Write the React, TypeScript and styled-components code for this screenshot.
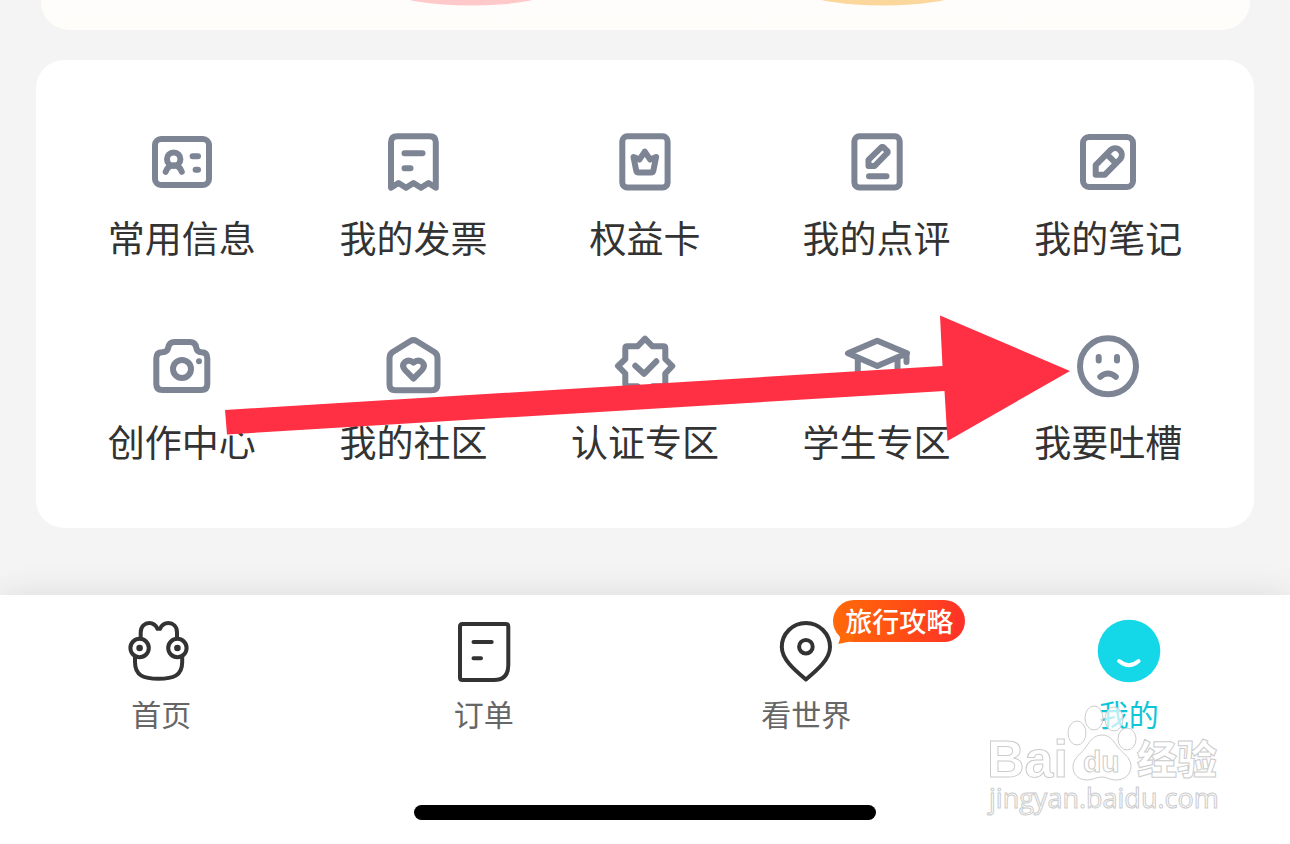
import React from "react";
import styled, { createGlobalStyle } from "styled-components";

const GlobalStyle = createGlobalStyle`
  * { box-sizing: border-box; }
  body {
    margin: 0;
    background: #f4f4f4;
    font-family: "Noto Sans CJK SC", sans-serif;
    -webkit-font-smoothing: antialiased;
  }
`;

const Page = styled.div`
  display: flex;
  flex-direction: column;
  min-height: 100vh;
  background: #f4f4f4;
`;

const Content = styled.main`
  flex: 1;
  display: flex;
  flex-direction: column;
  gap: 30px;
  padding: 0 36px 67px;
`;

const Promo = styled.section`
  display: grid;
  grid-template-columns: 366fr 128px 284fr 128px 303fr;
  height: 30px;
  margin: 0 4px 0 5px;
  border-radius: 0 0 28px 28px;
  background: linear-gradient(#fffdfb, #fffdfa);
`;

const PromoPill = styled.svg<{ $column: number }>`
  grid-column: ${(p) => p.$column};
  grid-row: 1;
  width: 128px;
  height: 6px;
`;

const Card = styled.section`
  position: relative;
  display: grid;
  grid-template-columns: repeat(5, 1fr);
  row-gap: 72px;
  padding: 70px 30px 62px;
  border-radius: 28px;
  background: #fff;
`;

const Tile = styled.button`
  display: flex;
  flex-direction: column;
  align-items: center;
  gap: 18px;
  padding: 0;
  border: 0;
  background: none;
  color: #333;
  font: 400 37px/50px "Noto Sans CJK SC", sans-serif;
  white-space: nowrap;
  cursor: pointer;
`;

const Icon = styled.svg<{ $color: string; $weight: number }>`
  display: block;
  width: 64px;
  height: 64px;
  overflow: visible;
  fill: none;
  stroke: ${(p) => p.$color};
  stroke-width: ${(p) => p.$weight};
  stroke-linecap: round;
  stroke-linejoin: round;
`;

const Pointer = styled.svg`
  position: absolute;
  inset: 0;
  width: 100%;
  height: 100%;
  fill: #ff3044;
  pointer-events: none;
`;

const TabBar = styled.nav`
  position: relative;
  display: flex;
  flex-direction: column;
  padding: 24px 0;
  background: #fff;
  box-shadow: 0 0 32px rgba(0, 0, 0, 0.1);
`;

const Tabs = styled.div`
  display: grid;
  grid-template-columns: repeat(4, 1fr);
`;

const Tab = styled.a<{ $active?: boolean }>`
  display: flex;
  flex-direction: column;
  align-items: center;
  gap: 10px;
  color: ${(p) => (p.$active ? "#0fc6d8" : "#666")};
  font-size: 30px;
  font-weight: 400;
  line-height: 40px;
  text-decoration: none;
`;

const TabIcon = styled.span`
  position: relative;
  display: block;
`;

const Badge = styled.span`
  position: absolute;
  left: 59px;
  top: -19px;
  padding: 0 12px;
  border-radius: 22px;
  background: linear-gradient(100deg, #ff6a08, #ff5014 50%, #ff2e2a);
  color: #fff;
  font-size: 27px;
  font-weight: 500;
  line-height: 42px;
  white-space: nowrap;

  &::before {
    content: "";
    position: absolute;
    left: 5px;
    bottom: -2px;
    width: 16px;
    height: 14px;
    background: #ff6a08;
    clip-path: polygon(0 0, 100% 40%, 80% 80%, 0 100%, 12% 60%);
  }
`;

const HomeIndicator = styled.div`
  width: 462px;
  height: 15px;
  margin: 72px auto 0;
  border-radius: 8px;
  background: #000;
`;

const Watermark = styled.svg`
  position: absolute;
  right: 64px;
  bottom: 20px;
  width: 244px;
  height: 124px;
  fill: rgba(255, 255, 255, 0.7);
  stroke: #cccccc;
  stroke-width: 1;
  pointer-events: none;
`;

const tiles = [
  {
    label: "常用信息",
    art: (
      <>
        <rect x="5" y="9" width="54" height="46" rx="6" />
        <circle cx="23.7" cy="29.2" r="6.7" />
        <path d="M15.7 41.8Q18 35.3 23.7 35.3Q29.4 35.3 31.8 41.8M42.6 26.3H48M45.6 39.7H48" />
      </>
    ),
  },
  {
    label: "我的发票",
    art: (
      <path d="M10 57.7V12.5Q10 6.3 16.2 6.3H48.6Q54.8 6.3 54.8 12.5V57.7L47.5 53L40 57.7L32.5 53L25 57.7L17.5 53ZM23.5 23.3H41.5M23.5 38.3H29.5" />
    ),
  },
  {
    label: "权益卡",
    art: (
      <>
        <rect x="9.3" y="6.3" width="45.3" height="51.3" rx="5" />
        <path d="M20.5 27L23.2 40.5Q23.6 42.6 25.6 42.6H38Q40 42.6 40.4 40.5L43.1 27L37.2 29.6L31.8 21.6L26.4 29.6Z" />
      </>
    ),
  },
  {
    label: "我的点评",
    art: (
      <>
        <rect x="9.4" y="6.3" width="45.3" height="51.3" rx="5" />
        <path d="M23.5 36V29.8L36.8 16.9H38L42.6 21.4V22.6L29.6 36ZM24 46.3H41.5" />
      </>
    ),
  },
  {
    label: "我的笔记",
    art: (
      <>
        <rect x="7" y="7" width="50" height="50" rx="6" />
        <path d="M19.7 44.7V35.2L35 19.6A6.7 6.7 0 0 1 44.4 29L28.9 44.7ZM31.2 24.6L39.4 32.8" />
      </>
    ),
  },
  {
    label: "创作中心",
    art: (
      <>
        <path d="M12.3 18.3Q17.5 18.3 18.3 13.5Q19.3 8 24.5 8H40Q45.3 8 46.2 13.5Q47 18.3 51.3 18.3Q57.3 18.3 57.3 24.5V50Q57.3 56 51.3 56H12.3Q6.3 56 6.3 50V24.5Q6.3 18.3 12.3 18.3Z" />
        <circle cx="32" cy="35" r="9" />
        <circle cx="49" cy="27.3" r="3" fill="#7d8494" stroke="none" />
      </>
    ),
  },
  {
    label: "我的社区",
    art: (
      <path d="M8.5 24Q8.5 20 11.7 18L29.5 7Q32.5 5.2 35.5 7L53.3 18Q56.5 20 56.5 24V50.5Q56.5 56.3 50.7 56.3H14.3Q8.5 56.3 8.5 50.5ZM32.5 44.6L24 36Q20.4 31.5 23.8 28.2Q28 25 32.5 28.6Q37 25 41.2 28.2Q44.6 31.5 41 36Z" />
    ),
  },
  {
    label: "认证专区",
    art: (
      <path d="M32 4.7L39.5 12.3H50.3Q52.3 12.3 52.3 14.3V25L59.3 32L52.3 39.5V50.3Q52.3 52.3 50.3 52.3H39.5L32 59.3L24.5 52.3H14.3Q12.3 52.3 12.3 50.3V39.5L5 32L12.3 25V14.3Q12.3 12.3 14.3 12.3H24.5ZM22.3 31.7L31 39.8L43.3 27.3" />
    ),
  },
  {
    label: "学生专区",
    art: (
      <path d="M3 19.3L32.3 6.8L62 19.3L32.3 32ZM12.8 24V44Q32.3 56 52.5 44V24M61.5 21V28" />
    ),
  },
  {
    label: "我要吐槽",
    art: (
      <>
        <circle cx="32" cy="32.3" r="28" />
        <path d="M24.3 42.8Q32 36.2 39.8 42.8" />
        <path d="M22.7 23V26.4M41 23V26.4" />
      </>
    ),
  },
];

const tabs = [
  {
    label: "首页",
    art: (
      <>
        <path d="M11.7 19V13.5C11.7 7 16 4 20.2 4C24.5 4 27 6.5 28.5 9.8H31C32.5 6.5 35.2 4 39.4 4C43.8 4 48 7 48 13.5V19M6 38V43C6 57 15 59.7 29.5 59.7C44 59.7 53.2 57 53.2 43V38" />
        <circle cx="10.6" cy="29" r="9.2" />
        <circle cx="48.4" cy="29" r="9.2" />
        <circle cx="10.6" cy="29" r="3.3" fill="#333" stroke="none" />
        <circle cx="48.4" cy="29" r="3.3" fill="#333" stroke="none" />
      </>
    ),
  },
  {
    label: "订单",
    art: (
      <path d="M10.5 5H53.8Q56.3 5 56.3 7.5V46Q56.3 61 42 61H10.5Q8 61 8 58.5V7.5Q8 5 10.5 5ZM21.5 23H39.7M21.5 39.3H29" />
    ),
  },
  {
    label: "看世界",
    badge: "旅行攻略",
    art: (
      <>
        <path d="M31.9 60.5C20 50.5 7.8 40 7.8 28A24.1 24.1 0 0 1 56 28C56 40 43.8 50.5 31.9 60.5Z" />
        <circle cx="31.9" cy="27.7" r="6.8" />
      </>
    ),
  },
  {
    label: "我的",
    active: true,
    art: (
      <>
        <circle cx="32" cy="32" r="31.3" fill="#14d8e8" stroke="none" />
        <path d="M22.2 42Q32 50.5 41.6 42" stroke="#fff" />
      </>
    ),
  },
];

export default function App() {
  return (
    <Page>
      <GlobalStyle />
      <Content>
        <Promo>
          <PromoPill $column={2} viewBox="0 0 128 6" aria-hidden="true">
            <ellipse cx="64" cy="-7" rx="74" ry="12.5" fill="#ffc9c9" />
          </PromoPill>
          <PromoPill $column={4} viewBox="0 0 128 6" aria-hidden="true">
            <ellipse cx="64" cy="-7" rx="74" ry="12.5" fill="#fcd79b" />
          </PromoPill>
        </Promo>
        <Card>
          {tiles.map((tile) => (
            <Tile key={tile.label} type="button">
              <Icon $color="#7d8494" $weight={6} viewBox="0 0 64 64" aria-hidden="true">
                {tile.art}
              </Icon>
              {tile.label}
            </Tile>
          ))}
          <Pointer viewBox="0 0 1218 468" preserveAspectRatio="none" aria-hidden="true">
            <path d="M189 350L906.5 306L904 255.5L1034 311L911.5 381L908.5 331L191 374.5Z" />
          </Pointer>
        </Card>
      </Content>
      <TabBar>
        <Tabs>
          {tabs.map((tab) => (
            <Tab key={tab.label} href="#" $active={tab.active}>
              <TabIcon>
                <Icon $color="#333" $weight={4} viewBox="0 0 64 64" aria-hidden="true">
                  {tab.art}
                </Icon>
                {tab.badge && <Badge>{tab.badge}</Badge>}
              </TabIcon>
              {tab.label}
            </Tab>
          ))}
        </Tabs>
        <HomeIndicator />
        <Watermark viewBox="0 0 244 124" aria-hidden="true">
          <ellipse cx="95" cy="33" rx="9" ry="12" />
          <ellipse cx="112" cy="18" rx="9" ry="12" />
          <ellipse cx="132" cy="19" rx="9" ry="12" />
          <ellipse cx="145" cy="39" rx="9" ry="11" />
          <path d="M120 35C127 35 131 40 135 46C140 53 149 57 149 66C149 75 142 80 134 80C128 80 125 77 120 77C114 77 111 80 105 80C97 80 91 75 91 67C91 58 99 54 104 47C108 41 112 35 120 35Z" />
          <text x="5" y="77" fontFamily="Liberation Sans, sans-serif" fontSize="52" fontWeight="700">Bai</text>
          <text x="101" y="72" fontFamily="Liberation Sans, sans-serif" fontSize="30" fontWeight="700">du</text>
          <text x="155" y="74" fontFamily="Noto Sans CJK SC, sans-serif" fontSize="40" fontWeight="900">经验</text>
          <text x="7" y="108" fontFamily="Open Sans, sans-serif" fontSize="27">jingyan.baidu.com</text>
        </Watermark>
      </TabBar>
    </Page>
  );
}
